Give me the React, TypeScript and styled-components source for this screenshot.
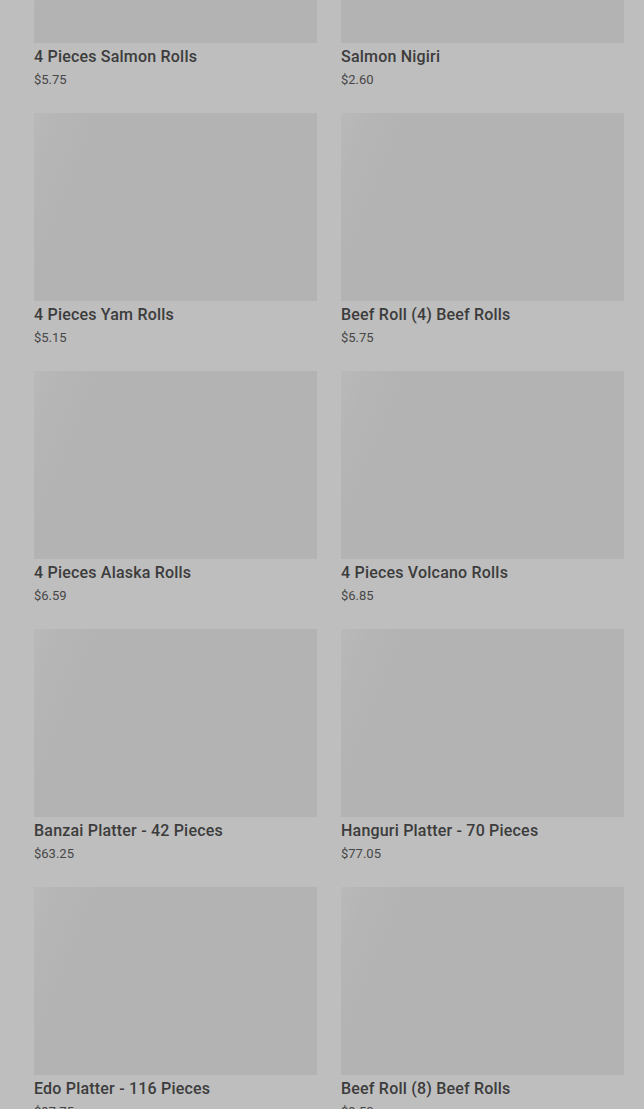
import React from "react";
import styled, { createGlobalStyle } from "styled-components";

type Item = {
  name: string;
  price: string;
};

const items: Item[] = [
  { name: "4 Pieces Salmon Rolls", price: "$5.75" },
  { name: "Salmon Nigiri", price: "$2.60" },
  { name: "4 Pieces Yam Rolls", price: "$5.15" },
  { name: "Beef Roll (4) Beef Rolls", price: "$5.75" },
  { name: "4 Pieces Alaska Rolls", price: "$6.59" },
  { name: "4 Pieces Volcano Rolls", price: "$6.85" },
  { name: "Banzai Platter - 42 Pieces", price: "$63.25" },
  { name: "Hanguri Platter - 70 Pieces", price: "$77.05" },
  { name: "Edo Platter - 116 Pieces", price: "$97.75" },
  { name: "Beef Roll (8) Beef Rolls", price: "$9.50" }
];

const GlobalStyle = createGlobalStyle`
  html, body {
    margin: 0;
    padding: 0;
    background: #bebebe;
    overflow: hidden;
  }
  body {
    font-family: Roboto, "Liberation Sans", sans-serif;
  }
`;

const StyledPage = styled.div`
  height: 1109px;
  overflow: hidden;
  background: #bebebe;
`;

// page is scrolled part way down the menu list
const StyledGrid = styled.div`
  display: grid;
  grid-template-columns: 283px 283px;
  column-gap: 24px;
  row-gap: 24px;
  padding: 0 20px 0 34px;
  margin-top: -145px;
`;

const StyledCard = styled.div`
  display: flex;
  flex-direction: column;
`;

const StyledImage = styled.div`
  height: 188px;
  background: linear-gradient(112deg, #b9b9b9 0, #b5b5b5 30px, #b3b3b3 60px, #b3b3b3 100%);
`;

const StyledName = styled.div`
  margin-top: 4px;
  font-size: 16px;
  line-height: 20px;
  font-weight: 500;
  letter-spacing: 0.2px;
  color: #3c3c3c;
  white-space: nowrap;
`;

const StyledPrice = styled.div`
  margin-top: 4px;
  font-size: 13px;
  line-height: 18px;
  color: #474747;
`;

const App = () => (
  <>
    <GlobalStyle />
    <StyledPage>
      <StyledGrid>
        {items.map((item) => (
          <StyledCard key={item.name}>
            <StyledImage />
            <StyledName>{item.name}</StyledName>
            <StyledPrice>{item.price}</StyledPrice>
          </StyledCard>
        ))}
      </StyledGrid>
    </StyledPage>
  </>
);

export default App;
